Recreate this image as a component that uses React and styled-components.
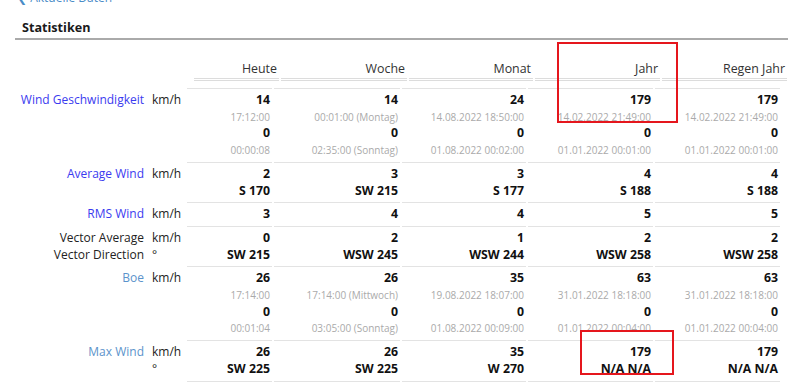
import React from 'react';
import styled, { createGlobalStyle } from 'styled-components';

const GlobalStyle = createGlobalStyle`
  body {
    margin: 0;
    background: #fff;
    font-family: "Open Sans", "DejaVu Sans", sans-serif;
    font-size: 12px;
    color: #222;
    overflow: hidden;
  }
`;

const dataCols = '85px 126px 124px 125px 125px';

const Page = styled.div`
  position: relative;
  width: 773px;
  padding-left: 15px;
`;

const BackLink = styled.a`
  display: block;
  margin-top: -11px;
  padding-left: 2px;
  color: #4a8cc7;
  line-height: 17px;
  text-decoration: none;
`;

const Title = styled.h2`
  margin: 13px 0 0;
  padding: 0 7px 2px;
  font-size: 12.6px;
  font-weight: 700;
  line-height: 17px;
  color: #1a1a1a;
  border-bottom: 2px solid #aaa;
`;

const HeadRow = styled.div`
  display: grid;
  grid-template-columns: 177px ${dataCols};
  column-gap: 2px;
  margin-top: 20px;
`;

const HeadCell = styled.div`
  text-align: right;
  padding: 0 2px 1px 0;
  font-size: 12.4px;
  line-height: 17px;
  color: #333;
  white-space: nowrap;
  border-bottom: 3px double #dcdcdc;
`;

const Body = styled.div`
  margin-top: 7px;
`;

const Label = styled.div`
  display: flex;
  flex-direction: column;
  align-items: flex-end;
  padding: 3px 0;
  line-height: 16.7px;
  white-space: nowrap;
  color: ${p => (p.$tone === 'link' ? '#3b3bef' : p.$tone === 'visited' ? '#5b93cb' : '#222')};
`;

const Unit = styled.div`
  padding: 3px 0 3px 6px;
  line-height: 16.7px;
  white-space: nowrap;
  color: #222;
`;

const Cell = styled.div`
  text-align: right;
  padding: 3px 2px 3px 0;
  white-space: nowrap;
  border-bottom: 1px solid #e3e3e3;
`;

const Row = styled.div`
  display: grid;
  grid-template-columns: 129px 39px ${dataCols};
  column-gap: 2px;
  &:first-child > * {
    border-top: 1px solid transparent;
  }
  &:first-child > ${Cell} {
    border-top-color: #e3e3e3;
  }
`;

const Value = styled.div`
  font-size: 12.3px;
  font-weight: 700;
  line-height: 16.7px;
  color: #111;
`;

const Time = styled.div`
  font-size: 10px;
  line-height: 16.7px;
  color: #aaa;
`;

const Marker = styled.div`
  position: absolute;
  box-sizing: border-box;
  left: ${p => p.$x}px;
  top: ${p => p.$y}px;
  width: ${p => p.$w}px;
  height: ${p => p.$h}px;
  border: 2px solid #e5161d;
  pointer-events: none;
`;

const periods = ['Heute', 'Woche', 'Monat', 'Jahr', 'Regen Jahr'];

const rows = [
  {
    label: ['Wind Geschwindigkeit'],
    tone: 'link',
    units: ['km/h'],
    cells: [
      [['v', '14'], ['t', '17:12:00'], ['v', '0'], ['t', '00:00:08']],
      [['v', '14'], ['t', '00:01:00 (Montag)'], ['v', '0'], ['t', '02:35:00 (Sonntag)']],
      [['v', '24'], ['t', '14.08.2022 18:50:00'], ['v', '0'], ['t', '01.08.2022 00:02:00']],
      [['v', '179'], ['t', '14.02.2022 21:49:00'], ['v', '0'], ['t', '01.01.2022 00:01:00']],
      [['v', '179'], ['t', '14.02.2022 21:49:00'], ['v', '0'], ['t', '01.01.2022 00:01:00']],
    ],
  },
  {
    label: ['Average Wind'],
    tone: 'link',
    units: ['km/h'],
    cells: [
      [['v', '2'], ['v', 'S 170']],
      [['v', '3'], ['v', 'SW 215']],
      [['v', '3'], ['v', 'S 177']],
      [['v', '4'], ['v', 'S 188']],
      [['v', '4'], ['v', 'S 188']],
    ],
  },
  {
    label: ['RMS Wind'],
    tone: 'link',
    units: ['km/h'],
    cells: [[['v', '3']], [['v', '4']], [['v', '4']], [['v', '5']], [['v', '5']]],
  },
  {
    label: ['Vector Average', 'Vector Direction'],
    units: ['km/h', '°'],
    cells: [
      [['v', '0'], ['v', 'SW 215']],
      [['v', '2'], ['v', 'WSW 245']],
      [['v', '1'], ['v', 'WSW 244']],
      [['v', '2'], ['v', 'WSW 258']],
      [['v', '2'], ['v', 'WSW 258']],
    ],
  },
  {
    label: ['Boe'],
    tone: 'visited',
    units: ['km/h'],
    cells: [
      [['v', '26'], ['t', '17:14:00'], ['v', '0'], ['t', '00:01:04']],
      [['v', '26'], ['t', '17:14:00 (Mittwoch)'], ['v', '0'], ['t', '03:05:00 (Sonntag)']],
      [['v', '35'], ['t', '19.08.2022 18:07:00'], ['v', '0'], ['t', '01.08.2022 00:09:00']],
      [['v', '63'], ['t', '31.01.2022 18:18:00'], ['v', '0'], ['t', '01.01.2022 00:04:00']],
      [['v', '63'], ['t', '31.01.2022 18:18:00'], ['v', '0'], ['t', '01.01.2022 00:04:00']],
    ],
  },
  {
    label: ['Max Wind'],
    tone: 'visited',
    units: ['km/h', '°'],
    cells: [
      [['v', '26'], ['v', 'SW 225']],
      [['v', '26'], ['v', 'SW 225']],
      [['v', '35'], ['v', 'W 270']],
      [['v', '179'], ['v', 'N/A N/A']],
      [['v', '179'], ['v', 'N/A N/A']],
    ],
  },
];

export default function App() {
  return (
    <Page>
      <GlobalStyle />
      <BackLink href="#">❮ Aktuelle Daten</BackLink>
      <Title>Statistiken</Title>

      <HeadRow>
        <div />
        {periods.map(p => (
          <HeadCell key={p}>{p}</HeadCell>
        ))}
      </HeadRow>

      <Body>
        {rows.map((row, i) => (
          <Row key={i}>
            <Label $tone={row.tone}>
              {row.label.map(l => (
                <div key={l}>{l}</div>
              ))}
            </Label>
            <Unit>
              {row.units.map(u => (
                <div key={u}>{u}</div>
              ))}
            </Unit>
            {row.cells.map((lines, j) => (
              <Cell key={j}>
                {lines.map(([kind, text], k) =>
                  kind === 'v' ? <Value key={k}>{text}</Value> : <Time key={k}>{text}</Time>
                )}
              </Cell>
            ))}
          </Row>
        ))}
      </Body>

      <Marker $x={557} $y={53} $w={121} $h={81} />
      <Marker $x={580} $y={341} $w={94} $h={45} />
    </Page>
  );
}
